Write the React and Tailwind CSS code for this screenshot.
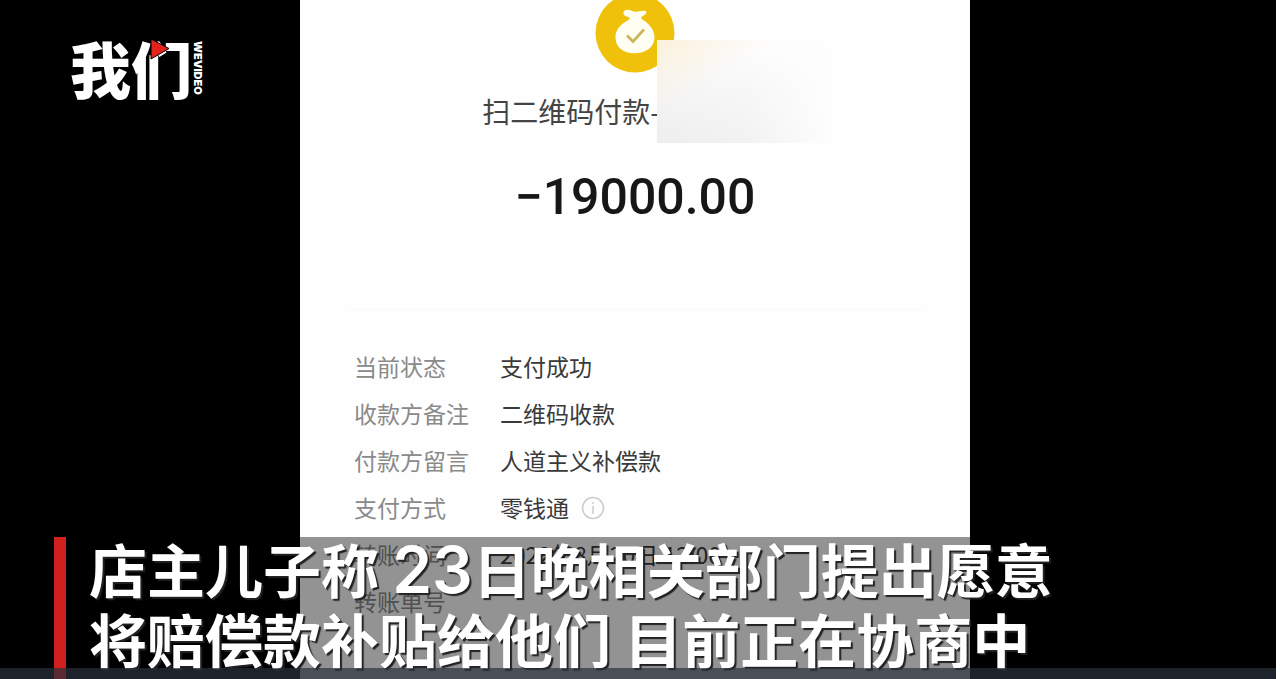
import React from "react";

const details = [
  { label: "当前状态", value: "支付成功" },
  { label: "收款方备注", value: "二维码收款" },
  { label: "付款方留言", value: "人道主义补偿款" },
  { label: "支付方式", value: "零钱通", info: true },
  { label: "转账时间", value: "2022年8月20日 12:00" },
  { label: "转账单号", value: "" },
];

function MoneyBagIcon() {
  return (
    <svg viewBox="0 0 80 80" className="size-20" aria-hidden="true">
      <circle cx="40" cy="40" r="39.5" fill="#efc10a" />
      <path
        d="M33.500 24c-2.500-.4-5-1.500-5-4 0-2.500 2.500-3.500 5-3.200 2.400.3 4 1.700 6.500 1.900 3.500.2 6-1.200 9.500-.9 1.900.2 2.400 1.200 1.600 2.400-1.200 1.700-3.700 2.700-5.300 4.300.8 1.800 3 2.800 5 4.300C56 33.300 59.500 38.500 59.500 44c0 10.500-8.500 16.200-20 16.200S20.500 54.500 20.500 44c0-6.200 3.800-10.800 8.500-14.200 2.200-1.600 4.300-2.600 6-4.300Z"
        fill="#fffef2"
      />
      <path d="m32 42.500 6 6L49 36.500" fill="none" stroke="#c9b458" strokeWidth="2.600" />
    </svg>
  );
}

function InfoIcon() {
  return (
    <svg viewBox="0 0 24 24" className="size-6" fill="none" stroke="#cfcfcf" aria-hidden="true">
      <circle cx="12" cy="12" r="10.500" strokeWidth="1.600" />
      <path d="M12 10v8M12 6v2" strokeWidth="1.600" />
    </svg>
  );
}

function Logo() {
  return (
    <div className="absolute top-[34px] left-[70px] flex items-center text-white">
      <span className="text-[61px] leading-[68px] font-black">我们</span>
      <svg viewBox="0 0 20 22" className="absolute top-1 left-20 h-[22px] w-5" aria-hidden="true">
        <path d="M1 1v20l18-10.500Z" fill="#e3231b" stroke="#000" strokeWidth="1" />
      </svg>
      <span className="font-[Inter,sans-serif] text-[11px] leading-3 font-black [writing-mode:vertical-rl]">
        WEVIDEO
      </span>
    </div>
  );
}

function Receipt() {
  return (
    <section className="col-start-2 overflow-hidden bg-[#fefefe]">
      <div className="relative -mt-[7px] flex flex-col items-center">
        <MoneyBagIcon />
        <h1 className="mt-[18px] flex text-[28px] leading-10 text-[#444]">
          <span>扫二维码付款-</span>
          <span className="w-32" />
        </h1>
        <div className="absolute top-[47px] left-[53.3%] h-[103px] w-[177px] bg-linear-to-r from-[#eeeeee] via-[#f2f2f2] to-[#fefefe]">
          <div className="h-full bg-linear-to-b from-[#fefefe] via-[#fefefe]/40 to-transparent">
            <div className="h-full bg-linear-to-br from-[#fbf0da] via-transparent via-35% to-transparent" />
          </div>
        </div>
        <p className="mt-9 font-[Roboto,sans-serif] text-[50px] leading-[60px] font-medium text-[#171717]">
          −19000.00
        </p>
      </div>
      <hr className="mx-12 mt-[82px] border-[#f8f8f8]" />
      <dl className="mt-[33px] ml-[54px] text-[23px] leading-[47px]">
        {details.map((row) => (
          <div key={row.label} className="flex">
            <dt className="w-[146px] shrink-0 text-[#8a8a8a]">{row.label}</dt>
            <dd className="flex items-center gap-3 whitespace-nowrap text-[#3a3a3a]">
              {row.value}
              {row.info && (
                <button type="button" aria-label="零钱通说明">
                  <InfoIcon />
                </button>
              )}
            </dd>
          </div>
        ))}
      </dl>
    </section>
  );
}

function Caption() {
  return (
    <div className="absolute inset-x-0 bottom-0 h-[142px] overflow-hidden bg-black/42">
      <div className="flex h-full">
        <div className="ml-[54px] w-3 shrink-0 bg-[#d0211c]" />
        <p className="-mt-1 ml-[23px] text-[58px] leading-[70px] font-bold whitespace-nowrap text-white [text-shadow:2px_2px_1px_#222]">
          店主儿子称{" "}
          <span className="font-[Inter,sans-serif] text-[64px] leading-none font-semibold">23</span>
          日晚相关部门提出愿意
          <br />
          将赔偿款补贴给他们 目前正在协商中
        </p>
      </div>
      <div className="absolute inset-x-0 bottom-0 h-[11px] bg-[#29313d]/70" />
    </div>
  );
}

export default function App() {
  return (
    <div className="min-h-screen bg-white pr-1 font-['Noto_Sans_CJK_SC',sans-serif]" lang="zh-CN">
      <main className="relative grid min-h-screen grid-cols-[150fr_335fr_153fr] overflow-hidden bg-black">
        <Receipt />
        <Logo />
        <Caption />
      </main>
    </div>
  );
}
